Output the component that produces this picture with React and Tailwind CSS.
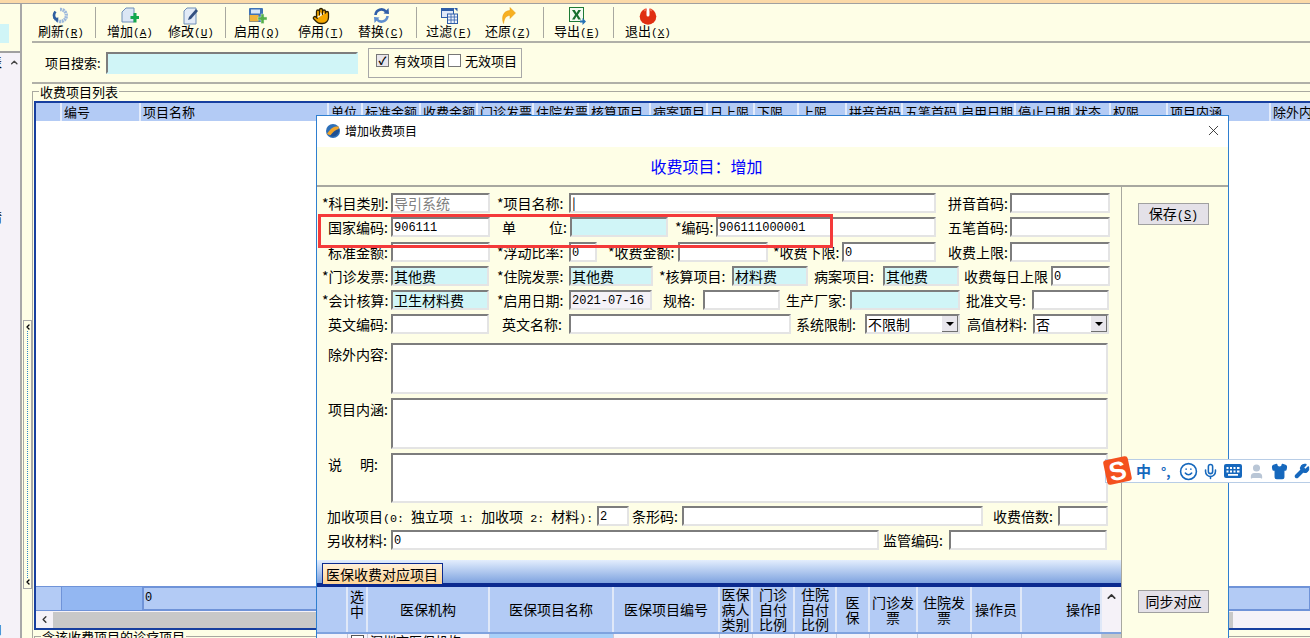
import { ChevronLeft, ChevronUp, Hand, Mic, Shirt, Smile, User, Wrench, X } from 'lucide-react';

const toolbar = [
  { key: 'refresh', label: '刷新', hot: 'R', w: 'w-[58px]', sep: 'ml-[5px] mr-[4px]' },
  { key: 'add', label: '增加', hot: 'A', w: 'w-[60px]' },
  { key: 'edit', label: '修改', hot: 'U', w: 'w-[62px]', sep: 'ml-[3px] mr-[2px]' },
  { key: 'enable', label: '启用', hot: 'Q', w: 'w-[58px]' },
  { key: 'stop', label: '停用', hot: 'T', w: 'w-[70px]' },
  { key: 'swap', label: '替换', hot: 'C', w: 'w-[50px]', sep: 'ml-[10px] mr-[2px]' },
  { key: 'filter', label: '过滤', hot: 'F', w: 'w-[60px]' },
  { key: 'undo', label: '还原', hot: 'Z', w: 'w-[58px]', sep: 'ml-[6px] mr-[3px]' },
  { key: 'excel', label: '导出', hot: 'E', w: 'w-[60px]', sep: 'ml-[6px] mr-[4px]' },
  { key: 'exit', label: '退出', hot: 'X', w: 'w-[60px]' },
];

const listColumns = [
  ['', 'w-[26px]'],
  ['编号', 'w-[79px]'],
  ['项目名称', 'w-[188px]'],
  ['单位', 'w-[34px]'],
  ['标准金额', 'w-[58px]'],
  ['收费金额', 'w-[57px]'],
  ['门诊发票', 'w-[56px]'],
  ['住院发票', 'w-[55px]'],
  ['核算项目', 'w-[62px]'],
  ['病案项目', 'w-[57px]'],
  ['日上限', 'w-[47px]'],
  ['下限', 'w-[44px]'],
  ['上限', 'w-[48px]'],
  ['拼音首码', 'w-[56px]'],
  ['五笔首码', 'w-[56px]'],
  ['启用日期', 'w-[57px]'],
  ['停止日期', 'w-[57px]'],
  ['状态', 'w-[38px]'],
  ['权限', 'w-[57px]'],
  ['项目内涵', 'w-[103px]'],
  ['除外内容', 'w-[60px]'],
];

const insuranceColumns = [
  { title: '', w: 'w-[31px]' },
  { title: ['选', '中'], w: 'w-[20px]', head: 'justify-start pt-[2px]' },
  { title: '医保机构', w: 'w-[122px]', tone: 'bg-[#f5f2f8]' },
  { title: '医保项目名称', w: 'w-[124px]', tone: 'bg-[#a9d0f8]' },
  { title: '医保项目编号', w: 'w-[106px]' },
  { title: ['医保', '病人', '类别'], w: 'w-[33px]' },
  { title: ['门诊', '自付', '比例'], w: 'w-[42px]' },
  { title: ['住院', '自付', '比例'], w: 'w-[42px]' },
  { title: ['医', '保'], w: 'w-[33px]' },
  { title: ['门诊发', '票'], w: 'w-[48px]' },
  { title: ['住院发', '票'], w: 'w-[54px]' },
  { title: '操作员', w: 'w-[50px]' },
  { title: '操作时', w: 'w-[80px]', head: '!items-start pl-[44px]' },
];

function ToolIcon({ name }) {
  if (name === 'refresh') {
    return (
      <svg width="18" height="17" viewBox="0 0 18 17" fill="none">
        <path d="M8 2.500a6 6 0 1 1-4.500 9.500" stroke="#9db9dc" strokeWidth="3.400" strokeDasharray="2 .6" />
        <path d="M3.500 4.500C1.500 7 1.800 10 3.500 12" stroke="#2f5f9f" strokeWidth="2.600" />
        <path d="M1 11l5.500-.5-1 5z" fill="#2f5f9f" />
      </svg>
    );
  }
  if (name === 'add') {
    return (
      <svg width="18" height="18" viewBox="0 0 18 18">
        <path d="M5 1h8v14H1V5z" fill="#dbe6f5" stroke="#6f8fb8" />
        <path d="M9.500 9h3V6h3v3h2.500v3h-2.500v3.500h-3V12h-3z" fill="#14a84c" />
      </svg>
    );
  }
  if (name === 'edit') {
    return (
      <svg width="16" height="18" viewBox="0 0 16 18">
        <path d="M4 1h9v16H1V4z" fill="#e2ebf7" stroke="#6f8fb8" />
        <path d="M5 13l1-3 7-8 2 2-7 8z" fill="#33507f" />
      </svg>
    );
  }
  if (name === 'enable') {
    return (
      <svg width="19" height="18" viewBox="0 0 19 18">
        <rect x="1" y="1" width="14" height="14" rx="1" fill="#3f73b8" />
        <rect x="3" y="2.500" width="9" height="4" fill="#d6e6f8" />
        <rect x="1.500" y="8" width="9" height="6.500" fill="#f0b43c" />
        <path d="M10 10h3V7h3v3h3v3h-3v3.500h-3V13h-3z" fill="#55b04a" stroke="#d8efd0" strokeWidth=".5" />
      </svg>
    );
  }
  if (name === 'stop') {
    return <Hand size={18} fill="#f5a800" color="#2c2000" strokeWidth={1.700} />;
  }
  if (name === 'swap') {
    return (
      <svg width="17" height="17" viewBox="0 0 17 17" fill="none">
        <path d="M2.500 8A6 6 0 0 1 13 4.500" stroke="#2f5ea8" strokeWidth="2.600" />
        <path d="M10.500 6.500l5.500.5-.5-6z" fill="#2f5ea8" />
        <path d="M14.500 9A6 6 0 0 1 4 12.500" stroke="#5f8fd0" strokeWidth="2.600" />
        <path d="M6.500 10.500L1 10l.5 6z" fill="#5f8fd0" />
      </svg>
    );
  }
  if (name === 'filter') {
    return (
      <svg width="17" height="17" viewBox="0 0 17 17">
        <rect x="0.500" y="1.500" width="12" height="9" fill="#dfe9f8" stroke="#2f5ea8" />
        <rect x="0.500" y="1.500" width="12" height="2.500" fill="#2f5ea8" />
        <rect x="6.500" y="7" width="10" height="9.500" fill="#eef4fc" stroke="#2f5ea8" />
        <path d="M6.500 10h10M6.500 13h10M10 7v9.500M13.300 7v9.500" stroke="#2f5ea8" strokeWidth=".8" />
        <path d="M13 1h3.500v3.500z" fill="#2f5ea8" />
      </svg>
    );
  }
  if (name === 'undo') {
    return (
      <svg width="15" height="17" viewBox="0 0 15 17">
        <path d="M9 0.500l5.500 5.500L9 11.500V8.500C5.500 8.500 3.500 10.500 2.500 16.500 .5 11 1.500 3.800 9 3.500z" fill="#f7b021" stroke="#e79a10" strokeWidth=".5" />
      </svg>
    );
  }
  if (name === 'excel') {
    return (
      <svg width="17" height="18" viewBox="0 0 17 18">
        <rect x="0.500" y="0.500" width="14" height="14" fill="#f4fbf2" stroke="#1d7a35" />
        <path d="M3 3h2.800L7.500 6 9.300 3H12L8.900 7.700 12 12.500H9.200L7.500 9.300 5.700 12.500H3l3.100-4.800z" fill="#17702f" />
        <path d="M11 13.500h2.500V11l3.500 3.500-3.500 3.500v-2.500H11z" fill="#2472b5" />
      </svg>
    );
  }
  return (
    <svg width="18" height="18" viewBox="0 0 18 18">
      <circle cx="9" cy="9.500" r="8.300" fill="#e02f12" />
      <path d="M7.500 1h3v7a1.500 1.500 0 0 1-3 0z" fill="#fff" />
      <path d="M4.500 3a8 8 0 0 1 3-1.200v2a6 6 0 0 0-2 .8zM13.500 3a8 8 0 0 0-3-1.200v2a6 6 0 0 1 2 .8z" fill="#f26a4d" />
    </svg>
  );
}

function Sep({ className }) {
  return <div className={`h-[31px] w-[1px] shrink-0 bg-[#a8a8a0] ${className}`} />;
}

function Label({ className, children }) {
  return <div className={`h-[20px] shrink-0 whitespace-pre text-[14px] leading-[20px] text-black ${className}`}>{children}</div>;
}

function Ascii({ children }) {
  return <span className="font-['Liberation_Mono',monospace] text-[11.7px]">{children}</span>;
}

function Field({ className, tone = 'bg-white', mono, muted, children }) {
  return (
    <div
      className={`h-[20px] shrink-0 overflow-hidden whitespace-nowrap border-2 border-t-[#7d7d7d] border-l-[#7d7d7d] border-r-[#e4e4e4] border-b-[#e4e4e4] pl-[1px] ${tone} ${className} ${mono ? "font-['Liberation_Mono',monospace] text-[12px] leading-[19px]" : 'text-[14px] leading-[17px]'} ${muted ? 'text-[#808080]' : 'text-black'}`}
    >
      {children}
    </div>
  );
}

function Select({ className, children }) {
  return (
    <div className={`flex h-[20px] shrink-0 items-center justify-between border-2 border-t-[#7d7d7d] border-l-[#7d7d7d] border-r-[#e4e4e4] border-b-[#e4e4e4] bg-white pl-[1px] text-[14px] ${className}`}>
      <span>{children}</span>
      <span className="flex h-[16px] w-[16px] items-center justify-center border-r border-b border-[#707070] bg-[#e8e6ec]">
        <span className="h-0 w-0 border-x-[4px] border-t-[4px] border-x-transparent border-t-black" />
      </span>
    </div>
  );
}

function SideButton({ children, className }) {
  return (
    <div className={`flex w-[71px] items-center justify-center border border-[#a0a0a0] bg-[#e4e1e8] text-[14px] text-black ${className}`}>
      {children}
    </div>
  );
}

const CYAN = 'bg-[#d0f5f7]';

function ChargeForm() {
  return (
    <div className="flex w-[804px] shrink-0 flex-col pt-[6px]">
      <div className="flex h-[20px]">
        <Label className="w-[74px] pl-[5px]">*科目类别:</Label>
        <Field className="w-[99px]" muted>导引系统</Field>
        <Label className="w-[79px] pl-[7px]">*项目名称:</Label>
        <Field className="w-[367px]">|</Field>
        <Label className="w-[74px] pl-[12px]">拼音首码:</Label>
        <Field className="w-[100px]" />
      </div>
      <div className="mt-[4px] flex h-[20px]">
        <Label className="w-[74px] pl-[11px]">国家编码:</Label>
        <Field className="w-[99px]" mono>906111</Field>
        <Label className="flex w-[80px] justify-between pl-[12px] pr-[3px]"><span>单</span><span>位:</span></Label>
        <Field className="w-[98px]" tone={CYAN} />
        <Label className="w-[48px] pl-[7px]">*编码:</Label>
        <Field className="w-[220px]" mono>906111000001</Field>
        <Label className="w-[74px] pl-[12px]">五笔首码:</Label>
        <Field className="w-[100px]" />
      </div>
      <div className="mt-[5px] flex h-[20px]">
        <Label className="w-[74px] pl-[11px]">标准金额:</Label>
        <Field className="w-[99px]" />
        <Label className="w-[79px] pl-[7px]">*浮动比率:</Label>
        <Field className="w-[28px]" mono>0</Field>
        <Label className="w-[81px] pl-[11px]">*收费金额:</Label>
        <Field className="w-[90px]" />
        <Label className="w-[74px] pl-[5px]">*收费下限:</Label>
        <Field className="w-[94px]" mono>0</Field>
        <Label className="w-[74px] pl-[12px]">收费上限:</Label>
        <Field className="w-[100px]" />
      </div>
      <div className="mt-[4px] flex h-[20px]">
        <Label className="w-[74px] pl-[5px]">*门诊发票:</Label>
        <Field className="w-[98px]" tone={CYAN}>其他费</Field>
        <Label className="w-[80px] pl-[8px]">*住院发票:</Label>
        <Field className="w-[84px]" tone={CYAN}>其他费</Field>
        <Label className="w-[79px] pl-[6px]">*核算项目:</Label>
        <Field className="w-[76px]" tone={CYAN}>材料费</Field>
        <Label className="w-[75px] pl-[6px]">病案项目:</Label>
        <Field className="w-[76px]" tone={CYAN}>其他费</Field>
        <Label className="w-[92px] pl-[5px]">收费每日上限</Label>
        <Field className="w-[59px]" mono>0</Field>
      </div>
      <div className="mt-[4px] flex h-[20px]">
        <Label className="w-[74px] pl-[5px]">*会计核算:</Label>
        <Field className="w-[98px]" tone={CYAN}>卫生材料费</Field>
        <Label className="w-[80px] pl-[8px]">*启用日期:</Label>
        <Field className="w-[83px]" tone="bg-[#f5f2f8]" mono>2021-07-16</Field>
        <Label className="w-[51px] pl-[11px]">规格:</Label>
        <Field className="w-[77px]" />
        <Label className="w-[70px] pl-[6px]">生产厂家:</Label>
        <Field className="w-[110px]" tone={CYAN} />
        <Label className="w-[72px] pl-[6px]">批准文号:</Label>
        <Field className="w-[77px]" />
      </div>
      <div className="mt-[4px] flex h-[20px]">
        <Label className="w-[74px] pl-[11px]">英文编码:</Label>
        <Field className="w-[98px]" />
        <Label className="w-[80px] pl-[13px]">英文名称:</Label>
        <Field className="w-[222px]" />
        <Label className="w-[74px] pl-[5px]">系统限制:</Label>
        <Select className="w-[95px]">不限制</Select>
        <Label className="w-[73px] pl-[7px]">高值材料:</Label>
        <Select className="w-[76px]">否</Select>
      </div>

      <div className="mt-[9px] flex h-[51px] items-start">
        <Label className="mt-[1px] w-[74px] pl-[11px]">除外内容:</Label>
        <Field className="!h-[51px] w-[717px]" />
      </div>
      <div className="mt-[4px] flex h-[51px] items-start">
        <Label className="mt-[1px] w-[74px] pl-[11px]">项目内涵:</Label>
        <Field className="!h-[51px] w-[717px]" />
      </div>
      <div className="mt-[4px] flex h-[50px] items-start">
        <Label className="mt-[1px] flex w-[74px] justify-between pl-[11px] pr-[13px]"><span>说</span><span>明:</span></Label>
        <Field className="!h-[50px] w-[717px]" />
      </div>

      <div className="mt-[3px] flex h-[21px]">
        <Label className="w-[280px] pl-[10px]">
          加收项目<Ascii>(0: </Ascii>独立项<Ascii> 1: </Ascii>加收项<Ascii> 2: </Ascii>材料<Ascii>):</Ascii>
        </Label>
        <Field className="w-[32px]" mono>2</Field>
        <Label className="w-[53px] pl-[3px]">条形码:</Label>
        <Field className="w-[301px]" />
        <Label className="w-[75px] pl-[10px]">收费倍数:</Label>
        <Field className="w-[50px]" />
      </div>
      <div className="mt-[3px] flex h-[20px]">
        <Label className="w-[74px] pl-[10px]">另收材料:</Label>
        <Field className="w-[488px]" mono>0</Field>
        <Label className="w-[70px] pl-[4px]">监管编码:</Label>
        <Field className="w-[158px]" />
      </div>

      {/* tab strip */}
      <div className="mt-[10px] h-[25px] w-[804px] border-b-2 border-b-[#0b2a8f] bg-gradient-to-b from-[#e4eefd] to-[#7fa3df] pl-[5px] pt-[3px]">
        <div className="h-[21px] w-[121px] border border-b-0 border-[#0b2a8f] bg-gradient-to-b from-[#fff0d8] to-[#ffd596] pl-[3px] text-[14px] leading-[20px] text-black">
          医保收费对应项目
        </div>
      </div>

      {/* insurance grid */}
      <div className="flex h-[60px] w-[804px] flex-col overflow-hidden border-t-2 border-t-[#0b2a8f] bg-[#f5f2f8]">
        <div className="flex h-[47px] shrink-0 border-b-2 border-b-[#7fa3df] bg-[#b3cbf5]">
          {insuranceColumns.map((col, i) => (
            <div key={i} className={`flex shrink-0 flex-col items-center justify-center overflow-hidden border-r-2 border-r-[#dfe8f8] text-[14px] leading-[15px] text-black ${col.w} ${col.head || ''}`}>
              {Array.isArray(col.title)
                ? col.title.map((t) => <span key={t} className="whitespace-nowrap">{t}</span>)
                : <span className="whitespace-nowrap">{col.title}</span>}
            </div>
          ))}
          <div className="flex w-[19px] shrink-0 items-start justify-center bg-[#f5f2f8] pt-[3px]">
            <ChevronUp size={13} strokeWidth={3} color="#333" />
          </div>
        </div>
        <div className="flex flex-1">
          {insuranceColumns.map((col, i) => (
            <div key={i} className={`shrink-0 border-r border-r-[#c8c8d8] text-[13px] leading-[14px] ${col.w} ${col.tone || ''}`}>
              {i === 1 && <div className="ml-[3px] mt-[1px] h-[13px] w-[13px] border border-[#555] bg-white" />}
              {i === 2 && <span className="whitespace-nowrap pl-[2px]">深圳市医保机构</span>}
            </div>
          ))}
          <div className="w-[19px] shrink-0 bg-[#c8c8c8]" />
        </div>
      </div>
    </div>
  );
}

function ChargeDialog() {
  return (
    <div className="absolute left-[316px] top-[115px] z-10 flex h-[523px] w-[913px] flex-col overflow-hidden border-x border-t border-[#2f7fd0] bg-[#fefee6] font-['Noto_Sans_CJK_SC','Liberation_Sans',sans-serif]">
      <div className="flex h-[31px] shrink-0 items-center bg-white pb-[2px] pl-[8px] pr-[6px]">
        <svg width="16" height="16" viewBox="0 0 16 16">
          <circle cx="8" cy="8" r="7" fill="#2d6fb8" />
          <path d="M2 11C6 4 10 3 14 3.500 13 11 7 14 2 11z" fill="#f1a52b" />
          <path d="M5 13C8 9 10 6.500 14.500 6 14 11 10 15 5 13z" fill="#1f4f92" />
        </svg>
        <span className="ml-[4px] text-[12px] text-black">增加收费项目</span>
        <X size={17} strokeWidth={1.200} color="#222" className="ml-auto" />
      </div>
      <div className="flex h-[40px] shrink-0 items-center justify-center border-b-2 border-b-[#a8a8a0] pr-[132px] text-[16px] text-[#0000ff]">
        收费项目：增加
      </div>
      <div className="flex flex-1">
        <ChargeForm />
        <div className="flex w-[107px] shrink-0 flex-col border-l border-l-[#a8a8a0] pl-[16px]">
          <SideButton className="mt-[16px] h-[22px]">
            <span>保存<span className="font-['Liberation_Mono',monospace] text-[12px]">(<u>S</u>)</span></span>
          </SideButton>
          <SideButton className="mt-[365px] h-[23px]">同步对应</SideButton>
        </div>
      </div>
    </div>
  );
}

function ImeBar() {
  return (
    <div className="absolute left-[1105px] top-[459px] z-20 flex h-[24px] w-[205px] items-center border-y border-l border-[#b8cde6] bg-white text-[#1668bd]">
      <div className="-ml-[1px] -mt-[2px] flex h-[25px] w-[25px] -rotate-12 items-center justify-center rounded-[3px] bg-[#f4511e] font-['Liberation_Sans',sans-serif] text-[26px] font-bold leading-none text-white">
        S
      </div>
      <span className="ml-[6px] text-[15px] font-bold">中</span>
      <span className="ml-[10px] w-[15px] text-[13px] font-bold leading-none">°,</span>
      <Smile size={19} strokeWidth={2} className="ml-[3px]" />
      <Mic size={17} strokeWidth={2.200} className="ml-[4px]" />
      <svg width="18" height="14" viewBox="0 0 18 14" className="ml-[5px]">
        <rect width="18" height="14" rx="2" fill="#1668bd" />
        <path d="M2.500 3h2v2h-2zM6 3h2v2H6zM9.500 3h2v2h-2zM13 3h2.500v2H13zM2.500 6.500h2v2h-2zM6 6.500h2v2H6zM9.500 6.500h2v2h-2zM13 6.500h2.500v2H13zM4 10h10v1.800H4z" fill="#fff" />
      </svg>
      <User size={17} fill="#b9c6d6" color="#b9c6d6" className="ml-[6px]" />
      <Shirt size={17} fill="#1668bd" className="ml-[6px]" />
      <Wrench size={16} fill="#1668bd" className="ml-[6px]" />
    </div>
  );
}

export default function App() {
  return (
    <div className="relative flex h-[638px] w-[1310px] flex-col overflow-hidden bg-[#fefee6] font-['Noto_Sans_CJK_SC','Liberation_Sans',sans-serif] text-black">
      <div className="h-[4px] shrink-0 border-b border-b-[#a0a0a0] bg-[#fbd9a8]" />
      <div className="flex min-h-0 flex-1">
        {/* left tree panel, mostly cut off */}
        <div className="flex w-[22px] shrink-0 flex-col overflow-hidden border-r-2 border-r-[#a8a8a8] bg-[#f5f2f8]">
          <div className="h-[49px] shrink-0 border-b-2 border-b-[#a0a0a0] bg-[#fefee6] pt-[20px]">
            <div className="h-[19px] w-[9px] bg-[#d0f5f7]" />
          </div>
          <div className="flex h-[14px] items-center pt-[4px]">
            <span className="-ml-[11px] w-[15px] text-[13px] leading-[14px]">表</span>
            <ChevronUp size={11} strokeWidth={3} color="#444" className="ml-[6px]" />
          </div>
          <span className="-ml-[11px] mt-[143px] text-[13px] leading-[14px]">情</span>
          <span className="-ml-[11px] mt-[398px] text-[13px] leading-[14px]">口</span>
        </div>

        {/* collapse splitter */}
        <div className="w-[10px] shrink-0 pl-[1px] pt-[316px]">
          <div className="flex h-[269px] w-[9px] flex-col items-center justify-between border border-[#a8a8a8] py-[2px]">
            <ChevronLeft size={8} strokeWidth={4} color="#000" className="shrink-0" />
            <div className="w-0 flex-1 border-l border-dotted border-l-[#2f86c8]" />
            <ChevronLeft size={8} strokeWidth={4} color="#000" className="shrink-0" />
          </div>
        </div>

        <div className="flex min-w-0 flex-1 flex-col">
          {/* toolbar */}
          <div className="flex h-[39px] shrink-0 items-center border-b-2 border-b-[#b0b0a8] pt-[4px]">
            {toolbar.map((item) => (
              <div key={item.key} className="flex shrink-0 items-center">
                <div className={`flex flex-col items-center ${item.w}`}>
                  <div className="flex h-[17px] items-center"><ToolIcon name={item.key} /></div>
                  <div className="mt-[-2px] whitespace-nowrap text-[13px] leading-[17px]">
                    {item.label}
                    <span className="font-['Liberation_Mono',monospace] text-[11px]">(<u>{item.hot}</u>)</span>
                  </div>
                </div>
                {item.sep && <Sep className={`-mt-[4px] ${item.sep}`} />}
              </div>
            ))}
          </div>

          {/* search band */}
          <div className="flex h-[41px] shrink-0 items-center border-b-2 border-b-[#b0b0a8] pl-[13px]">
            <span className="w-[61px] text-[13px]">项目搜索:</span>
            <div className="h-[22px] w-[252px] border-2 border-t-[#7d7d7d] border-l-[#7d7d7d] border-r-[#d0f5f7] border-b-[#d0f5f7] bg-[#d0f5f7]" />
            <div className="ml-[10px] flex h-[30px] w-[154px] items-center border border-[#a8a8a8] pb-[4px] pl-[7px] text-[13px]">
              <span className="flex h-[13px] w-[13px] items-center justify-center border border-[#777] bg-[#e8e6ec] text-[11px] font-bold leading-none text-black">✓</span>
              <span className="ml-[5px] w-[54px]">有效项目</span>
              <span className="h-[13px] w-[13px] border border-[#777] bg-white" />
              <span className="ml-[4px]">无效项目</span>
            </div>
          </div>

          {/* charge item list */}
          <div className="relative mt-[7px] flex min-h-0 flex-1 flex-col border-l border-t border-[#a8a8a0] pl-[1px] pt-[9px]">
            <span className="absolute left-[6px] top-[-8px] bg-[#fefee6] px-[1px] text-[13px] leading-[15px]">收费项目列表</span>
            <div className="flex h-[529px] shrink-0 flex-col border-2 border-[#173f9f] border-r-0">
              <div className="flex h-[18px] shrink-0 overflow-hidden bg-[#b3cbf5]">
                {listColumns.map(([title, w], i) => (
                  <div key={i} className={`shrink-0 whitespace-nowrap border-r-2 border-r-[#e3ebfa] pl-[2px] text-[13px] leading-[18px] ${w}`}>
                    {title}
                  </div>
                ))}
              </div>
              <div className="flex-1 bg-white" />
              <div className="flex h-[25px] shrink-0 border-y border-[#6f93d8] bg-[#b3cbf5]">
                <div className="w-[26px] border-r border-r-[#6f93d8]" />
                <div className="w-[81px] border-r border-r-[#6f93d8] bg-[#93b7f2]" />
                <div className="flex-1 border border-[#6f93d8] pl-[1px] font-['Liberation_Mono',monospace] text-[12px] leading-[21px]">0</div>
              </div>
              <div className="flex h-[17px] shrink-0 items-center bg-[#f5f2f8]">
                <div className="flex w-[17px] justify-center"><ChevronLeft size={11} strokeWidth={3} color="#333" /></div>
                <div className="h-[16px] w-[1180px] bg-[#c8c8c8]" />
              </div>
            </div>
            <div className="relative mt-[6px] h-[8px] border-l border-t border-[#a8a8a0]">
              <span className="absolute left-[6px] top-[-7px] bg-[#fefee6] px-[1px] text-[13px] leading-[14px]">含该收费项目的诊疗项目</span>
            </div>
          </div>
        </div>
      </div>

      <ChargeDialog />
      <ImeBar />

      {/* red annotation frame from the screenshot */}
      <div className="absolute left-[318px] top-[214px] z-30 h-[34px] w-[515px] border-[3px] border-[#f43a3a]" />
    </div>
  );
}
